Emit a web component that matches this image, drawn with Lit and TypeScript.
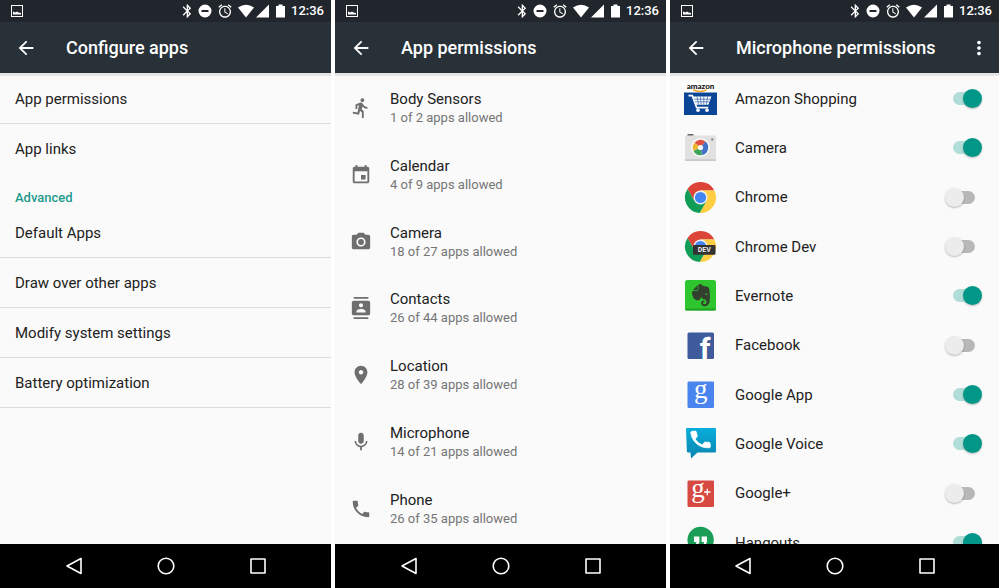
import { LitElement, html, svg, css, type TemplateResult, type SVGTemplateResult } from "lit";
import { customElement, property } from "lit/decorators.js";

const glyphs = {
  back: "M20 11H7.83l5.59-5.59L12 4l-8 8 8 8 1.41-1.41L7.83 13H20v-2z",
  more: "M12 8c1.1 0 2-.9 2-2s-.9-2-2-2-2 .9-2 2 .9 2 2 2zm0 2c-1.1 0-2 .9-2 2s.9 2 2 2 2-.9 2-2-.9-2-2-2zm0 6c-1.1 0-2 .9-2 2s.9 2 2 2 2-.9 2-2-.9-2-2-2z",
  run: "M13.49 5.48c1.1 0 2-.9 2-2s-.9-2-2-2-2 .9-2 2 .9 2 2 2zm-3.6 13.9l1-4.4 2.1 2v6h2v-7.5l-2.1-2 .6-3c1.3 1.5 3.3 2.5 5.5 2.5v-2c-1.9 0-3.5-1-4.3-2.4l-1-1.6c-.4-.6-1-1-1.7-1-.3 0-.5.1-.8.1l-5.2 2.2v4.7h2v-3.4l1.8-.7-1.6 8.1-4.9-1-.4 2 7 1.4z",
  event: "M17 12h-5v5h5v-5zM16 1v2H8V1H6v2H5c-1.11 0-1.99.9-1.99 2L3 19c0 1.1.89 2 2 2h14c1.1 0 2-.9 2-2V5c0-1.1-.9-2-2-2h-1V1h-2zm3 18H5V8h14v11z",
  camera: "M12 8.8a3.2 3.2 0 1 0 0 6.4 3.2 3.2 0 1 0 0-6.4zM9 2L7.17 4H4c-1.1 0-2 .9-2 2v12c0 1.1.9 2 2 2h16c1.1 0 2-.9 2-2V6c0-1.1-.9-2-2-2h-3.17L15 2H9zm3 15c-2.76 0-5-2.24-5-5s2.24-5 5-5 5 2.24 5 5-2.24 5-5 5z",
  contacts: "M20 0H4v2h16V0zM4 24h16v-2H4v2zM20 4H4c-1.1 0-2 .9-2 2v12c0 1.1.9 2 2 2h16c1.1 0 2-.9 2-2V6c0-1.1-.9-2-2-2zm-8 2.75c1.24 0 2.25 1.01 2.25 2.25s-1.01 2.25-2.25 2.25S9.75 10.24 9.75 9 10.76 6.75 12 6.75zM17 17H7v-1.5c0-1.67 3.33-2.5 5-2.5s5 .83 5 2.5V17z",
  place: "M12 2C8.13 2 5 5.13 5 9c0 5.25 7 13 7 13s7-7.75 7-13c0-3.87-3.13-7-7-7zm0 9.5c-1.38 0-2.5-1.12-2.5-2.5s1.12-2.5 2.5-2.5 2.5 1.12 2.5 2.5-1.12 2.5-2.5 2.5z",
  mic: "M12 14c1.66 0 2.99-1.34 2.99-3L15 5c0-1.66-1.34-3-3-3S9 3.34 9 5v6c0 1.66 1.34 3 3 3zm5.3-3c0 3-2.54 5.1-5.3 5.1S6.7 14 6.7 11H5c0 3.41 2.72 6.23 6 6.72V21h2v-3.28c3.28-.48 6-3.3 6-6.72h-1.7z",
  call: "M6.62 10.79c1.44 2.83 3.76 5.14 6.59 6.59l2.2-2.2c.27-.27.67-.36 1.02-.24 1.12.37 2.33.57 3.57.57.55 0 1 .45 1 1V20c0 .55-.45 1-1 1-9.39 0-17-7.61-17-17 0-.55.45-1 1-1h3.5c.55 0 1 .45 1 1 0 1.25.2 2.45.57 3.57.11.35.03.74-.25 1.02l-2.2 2.2z",
};

const glyph = (d: string) =>
  html`<svg class="glyph" viewBox="0 0 24 24" aria-hidden="true"><path d=${d} /></svg>`;

const chromeWheel = svg`
  <path fill="#db4437" d="M-12.98-8.48A15.5 15.5 0 0 1 13.83-7L0-7 0 0-6.06 3.5z" />
  <path fill="#ffcd40" d="M13.83-7A15.5 15.5 0 0 1-.85 15.48L6.06 3.5 0 0V-7z" />
  <path fill="#0f9d58" d="M-.85 15.48A15.5 15.5 0 0 1-12.98-8.48L-6.06 3.5 0 0 6.06 3.5z" />
  <circle r="7" fill="#f1f1f1" />
  <circle r="5.6" fill="#4285f4" />`;

const appIcons: Record<string, SVGTemplateResult> = {
  amazon: svg`
    <rect width="33" height="13" fill="#fff" />
    <text class="amazon" x="16.5" y="6.5" text-anchor="middle">amazon</text>
    <path d="M9 7.8q7 3 13.5 0" fill="none" stroke="#f7a11a" stroke-width="1.3" />
    <rect y="10.5" width="33" height="22.5" fill="#0b4596" />
    <path d="M4.5 13.7h3.8l4.4 12h11.6" fill="none" stroke="#fff" stroke-width="1.7" />
    <path d="M9 14.6h18.4l-3 8.2H12z" fill="#fff" />
    <path d="M9.8 17.2h16.6M10.8 19.8h14.6M13 14.6l1.6 8M16.4 14.6l.8 8M19.8 14.6v8M23.6 14.6l-1.2 8" stroke="#0b4596" stroke-width=".6" />
    <circle cx="14" cy="28.2" r="1.8" fill="#fff" />
    <circle cx="23" cy="28.2" r="1.8" fill="#fff" />`,
  camera: svg`
    <rect x="3.5" y="3" width="6" height="2" rx=".6" fill="#666" />
    <rect x="1" y="4.5" width="31" height="25" rx="1.2" fill="#e1e1e1" />
    <rect x="1" y="28.5" width="31" height="1.2" rx=".5" fill="#bdbdbd" />
    <circle cx="28.3" cy="8.5" r="1.2" fill="#8d8d8d" />
    <circle cx="16.5" cy="16.5" r="9.5" fill="#f7f7f7" />
    <g transform="translate(16.5 16.5)">
      <path fill="#e2513f" d="M0 0-6-4.8A7.7 7.7 0 0 1 5-5.9z" />
      <path fill="#4472c8" d="M0 0 5-5.9A7.7 7.7 0 0 1 1.5 7.5z" />
      <path fill="#3fa45b" d="M0 0 1.5 7.5A7.7 7.7 0 0 1-7 3.2z" />
      <path fill="#f0b62f" d="M0 0-7 3.2A7.7 7.7 0 0 1-6-4.8z" />
      <circle r="2.6" fill="#fff" />
    </g>`,
  chrome: svg`<g transform="translate(16.5 16.5)">${chromeWheel}</g>`,
  chromeDev: svg`
    <g transform="translate(16.5 16.5)">${chromeWheel}</g>
    <rect x="9" y="15" width="22.5" height="9.8" rx="1" fill="#333" />
    <text class="dev" x="20.3" y="22.3" text-anchor="middle">DEV</text>`,
  evernote: svg`
    <rect x="1" y="1" width="31" height="30.5" rx="2.5" fill="#2fc52f" />
    <rect x="1" y="29.5" width="31" height="2" rx="1" fill="#22a326" />
    <path transform="translate(6.4 5.2) scale(.88 .92)" fill="#33402f" d="M8.222 5.393c0 .239-.02.637-.256.895-.257.24-.652.259-.888.259H4.552c-.73 0-1.165 0-1.46.04-.159.02-.356.1-.455.14-.04.019-.04 0-.02-.02L8.38.796c.02-.02.04-.02.02.02-.04.099-.118.298-.138.457-.04.298-.04.736-.04 1.472v2.647zm5.348 17.869c-.67-.438-1.026-1.015-1.164-1.373a2.924 2.924 0 01-.217-1.095 3.007 3.007 0 013-3.004c.493 0 .888.398.888.895a.88.88 0 01-.454.776c-.099.06-.237.1-.336.12-.098.02-.473.06-.65.218-.198.16-.356.418-.356.697 0 .298.118.577.316.776.355.358.829.557 1.342.557a2.436 2.436 0 002.427-2.447c0-1.214-.809-2.29-1.875-2.766-.158-.08-.414-.14-.651-.2a8.04 8.04 0 00-.592-.1c-.829-.1-2.901-.755-3.04-2.605 0 0-.611 2.785-1.835 3.54-.118.06-.276.12-.454.16-.177.04-.374.06-.434.06-1.993.12-4.105-.517-5.565-2.03 0 0-.987-.815-1.5-3.103-.118-.558-.355-1.553-.493-2.488-.06-.338-.08-.597-.099-.836 0-.975.592-1.631 1.342-1.73h4.026c.69 0 1.086-.18 1.342-.42.336-.317.415-.775.415-1.312V1.354C9.05.617 9.703 0 10.669 0h.474c.197 0 .434.02.651.04.158.02.296.06.533.12 1.204.298 1.46 1.532 1.46 1.532s2.27.398 3.415.597c1.085.199 3.77.378 4.282 3.104 1.204 6.487.474 12.775.415 12.775-.849 6.129-5.901 5.83-5.901 5.83a4.1 4.1 0 01-2.428-.736zm4.54-13.034c-.652-.06-1.204.2-1.402.697-.04.1-.079.219-.059.278.02.06.06.08.099.1.237.12.631.179 1.204.239.572.06.967.1 1.223.06.04 0 .08-.02.119-.08.04-.06.02-.18.02-.277-.06-.537-.553-.936-1.204-1.017z" />`,
  facebook: svg`
    <rect x="3.5" y="3.5" width="26.5" height="26.5" rx="1.5" fill="#3f5b9b" />
    <text class="fb" x="21" y="30" text-anchor="middle">f</text>`,
  google: svg`
    <rect x="3.5" y="3.5" width="26.5" height="26.5" rx="1.2" fill="#4a84ee" />
    <text class="serif-g" x="16.8" y="19.5" text-anchor="middle">g</text>`,
  voice: svg`
    <defs><linearGradient id="voice" x1="0" y1="0" x2="0" y2="1">
      <stop offset="0" stop-color="#08aedb" /><stop offset="1" stop-color="#0b83b0" />
    </linearGradient></defs>
    <path fill="url(#voice)" d="M3 1h28q1 0 1 1v22.5q0 1-1 1H13.5L7 31.5l-.5-6H4q-1 0-1.1-1L2 2q0-1 1-1z" />
    <path fill="#fff" stroke="#fff" stroke-width=".8" transform="translate(4.6 .6) rotate(-6 12 12)" d=${glyphs.call} />`,
  plus: svg`
    <rect x="3.5" y="3.5" width="26.5" height="26.5" rx="1.2" fill="#d64a41" />
    <text class="serif-g" x="14" y="19.5" text-anchor="middle">g</text>
    <path d="M20 15h6.5M23.25 11.75v6.5" stroke="#fff" stroke-width="1.3" />`,
  hangouts: svg`
    <path fill="#1a9e57" d="M16.5.7a13.3 13.3 0 0 1 13.3 13.3c0 8-7 15-12.8 18v-4.7a13.3 13.3 0 1 1-.5-26.6z" />
    <path fill="#fff" d="M10 10.5h5.400v5.500l-2 4h-2.100l1.300-4H10zM17.600 10.500H23v5.500l-2 4h-2.100l1.300-4h-2.600z" />`,
};

const sheet = css`
  * { box-sizing: border-box; }
  h2, ul { margin: 0; padding: 0; }
  ul { list-style: none; }
  a { color: inherit; text-decoration: none; }
  button { border: 0; padding: 0; background: none; color: inherit; font: inherit; }
  svg { display: block; flex: none; }
  .glyph { width: 22px; height: 22px; fill: currentColor; }
`;

/** One phone screen: status bar, app bar, slotted content and navigation bar. */
@customElement("phone-screen")
export class PhoneScreen extends LitElement {
  @property() heading = "";
  @property({ type: Boolean }) menu = false;

  static styles = [sheet, css`
    :host { display: flex; flex-direction: column; min-width: 0; min-height: 0; background: #fafafa; }
    .status { display: flex; align-items: center; gap: 6px; flex: none; height: 22px; padding: 0 7px 0 11px; background: #20262b; color: #fff; }
    .status svg { fill: currentColor; }
    .note { margin-right: auto; }
    .indicators { display: flex; gap: 6px; }
    .network { display: flex; gap: 2px; }
    .clock { font-size: 13px; line-height: 22px; font-weight: 500; }
    .bar { display: flex; align-items: center; flex: none; height: 51px; padding: 0 9px 0 15px; background: #283138; color: #fff; }
    .title { flex: 1; margin-left: 29px; font-size: 18px; line-height: 24px; font-weight: 500; white-space: nowrap; }
    .content { flex: 1; min-height: 0; overflow: hidden; padding-top: 1px; box-shadow: inset 0 3px 0 #e4e4e4; }
    .nav { display: flex; justify-content: center; flex: none; height: 44px; background: #000; color: #fff; }
    .key { display: flex; align-items: center; justify-content: center; width: 92px; }
    .key svg { fill: none; stroke: currentColor; stroke-width: 1.6; stroke-linejoin: round; }
  `];

  render() {
    return html`
      <div class="status">
        <svg class="note" width="12" height="12" viewBox="0 0 12 12" aria-hidden="true"><path fill-rule="evenodd" d="M0 0h12v12H0zM1 1v10h10V1zM2 9.5V6.5L4.5 7.5 6 6.5 7.5 7.5 10 8v1.5z" /></svg>
        <div class="indicators">
          <svg width="10" height="14" viewBox="4.5 1.5 14 21" aria-label="Bluetooth"><path d="M17.71 7.71L12 2h-1v7.59L6.41 5 5 6.41 10.59 12 5 17.59 6.41 19 11 14.41V22h1l5.71-5.71-4.3-4.29 4.3-4.29zM13 5.83l1.88 1.88L13 9.59V5.83zm1.88 10.46L13 18.17v-3.76l1.88 1.88z" /></svg>
          <svg width="14" height="14" viewBox="0 0 14 14" aria-label="Do not disturb"><path fill-rule="evenodd" d="M7 .5a6.5 6.5 0 1 0 0 13 6.5 6.5 0 1 0 0-13zM3.500 6h7v2h-7z" /></svg>
          <svg width="14" height="14" viewBox="1.5 1.5 21 21" aria-label="Alarm"><path d="M22 5.72l-4.6-3.86-1.29 1.53 4.6 3.86L22 5.72zM7.88 3.39L6.6 1.86 2 5.71l1.29 1.53 4.59-3.85zM12.5 8H11v6l4.75 2.85.75-1.23-4-2.37V8zM12 4c-4.97 0-9 4.03-9 9s4.02 9 9 9c4.97 0 9-4.03 9-9s-4.03-9-9-9zm0 16c-3.87 0-7-3.13-7-7s3.13-7 7-7 7 3.13 7 7-3.13 7-7 7z" /></svg>
        </div>
        <div class="network">
          <svg width="16" height="14" viewBox="0 0 16 14" aria-label="Wi-Fi"><path d="M0 3.5Q8-2.2 16 3.5L8 13.5z" /></svg>
          <svg width="13" height="14" viewBox="0 0 13 14" aria-label="Signal"><path d="M13 .5v13H0z" /></svg>
        </div>
        <svg width="10" height="14" viewBox="0 0 10 14" aria-label="Battery"><path d="M1 2h2.500V.5h4V2H10v11.500H1z" /></svg>
        <span class="clock">12:36</span>
      </div>
      <header class="bar">
        <button class="action" aria-label="Navigate up">${glyph(glyphs.back)}</button>
        <h2 class="title">${this.heading}</h2>
        ${this.menu ? html`<button class="action" aria-label="More options">${glyph(glyphs.more)}</button>` : ""}
      </header>
      <main class="content"><slot></slot></main>
      <nav class="nav">
        <button class="key" aria-label="Back"><svg width="18" height="18" viewBox="0 0 18 18"><path d="M16 1.5v15L2 9z" /></svg></button>
        <button class="key" aria-label="Home"><svg width="18" height="18" viewBox="0 0 18 18"><circle cx="9" cy="9" r="7.8" /></svg></button>
        <button class="key" aria-label="Recents"><svg width="18" height="18" viewBox="0 0 18 18"><rect x="2" y="2" width="14" height="14" /></svg></button>
      </nav>`;
  }
}

interface Permission { icon: string; name: string; allowed: number; total: number; }
interface App { icon: string; name: string; on: boolean; }

const permissions: Permission[] = [
  { icon: glyphs.run, name: "Body Sensors", allowed: 1, total: 2 },
  { icon: glyphs.event, name: "Calendar", allowed: 4, total: 9 },
  { icon: glyphs.camera, name: "Camera", allowed: 18, total: 27 },
  { icon: glyphs.contacts, name: "Contacts", allowed: 26, total: 44 },
  { icon: glyphs.place, name: "Location", allowed: 28, total: 39 },
  { icon: glyphs.mic, name: "Microphone", allowed: 14, total: 21 },
  { icon: glyphs.call, name: "Phone", allowed: 26, total: 35 },
];

const apps: App[] = [
  { icon: "amazon", name: "Amazon Shopping", on: true },
  { icon: "camera", name: "Camera", on: true },
  { icon: "chrome", name: "Chrome", on: false },
  { icon: "chromeDev", name: "Chrome Dev", on: false },
  { icon: "evernote", name: "Evernote", on: true },
  { icon: "facebook", name: "Facebook", on: false },
  { icon: "google", name: "Google App", on: true },
  { icon: "voice", name: "Google Voice", on: true },
  { icon: "plus", name: "Google+", on: false },
  { icon: "hangouts", name: "Hangouts", on: true },
];

@customElement("app-root")
export class AppRoot extends LitElement {
  static styles = [sheet, css`
    :host { display: grid; grid-template: minmax(0, 1fr) / 331fr 331fr 329fr; gap: 4px; height: 100vh; background: #fff; color: #212121; font-family: Roboto, "Liberation Sans", sans-serif; font-size: 15px; line-height: 20px; }
    .setting { display: flex; align-items: center; height: 50px; padding: 0 15px; }
    .ruled { border-bottom: 1px solid #dcdcdc; }
    .section { height: 34px; padding: 14px 15px 0; color: #1d9a8a; font-size: 13px; line-height: 20px; font-weight: 500; }
    .permission { display: flex; align-items: center; gap: 18px; height: 67px; padding: 0 15px; }
    .permissions li:nth-child(4n) .permission { height: 66px; }
    .permission .glyph { color: #6e6e6e; }
    .lines { display: grid; }
    .count { color: #757575; font-size: 13px; line-height: 18px; }
    .app { display: flex; align-items: center; gap: 18px; height: 49px; padding: 0 17px 0 14px; }
    .apps li:nth-child(3n) .app { height: 50px; }
    .name { flex: 1; }
    .logo { width: 33px; height: 33px; overflow: visible; }
    .amazon { font: 900 8px Lato, sans-serif; fill: #111; }
    .dev { font: 700 7px Roboto, sans-serif; fill: #eee; }
    .fb { font: 700 30px Roboto, sans-serif; fill: #fff; }
    .serif-g { font: 27px "Liberation Serif", serif; fill: #fff; }
    .switch { appearance: none; display: grid; align-items: center; width: 37px; height: 20px; margin: 0; }
    .switch::before, .switch::after { content: ""; grid-area: 1 / 1; }
    .switch::before { justify-self: center; width: 22px; height: 13px; border-radius: 7px; background: #b8b8b8; }
    .switch::after { width: 19px; height: 19px; border-radius: 50%; background: #ececec; box-shadow: 0 1px 2px #0004; }
    .switch:checked::before { background: #b0ddd8; }
    .switch:checked::after { justify-self: end; background: #009688; }
  `];

  private setting(name: string, ruled = true): TemplateResult {
    return html`<li><a class="setting ${ruled ? "ruled" : ""}" href="#">${name}</a></li>`;
  }

  render() {
    return html`
      <phone-screen heading="Configure apps">
        <ul>
          ${this.setting("App permissions")}
          ${this.setting("App links", false)}
          <li class="section">Advanced</li>
          ${["Default Apps", "Draw over other apps", "Modify system settings", "Battery optimization"].map((n) => this.setting(n))}
        </ul>
      </phone-screen>
      <phone-screen heading="App permissions">
        <ul class="permissions">
          ${permissions.map((p) => html`
            <li><a class="permission" href="#">
              ${glyph(p.icon)}
              <span class="lines"><span>${p.name}</span><span class="count">${p.allowed} of ${p.total} apps allowed</span></span>
            </a></li>`)}
        </ul>
      </phone-screen>
      <phone-screen heading="Microphone permissions" menu>
        <ul class="apps">
          ${apps.map((a) => html`
            <li><label class="app">
              <svg class="logo" viewBox="0 0 33 33" aria-hidden="true">${appIcons[a.icon]}</svg>
              <span class="name">${a.name}</span>
              <input class="switch" type="checkbox" role="switch" .checked=${a.on} />
            </label></li>`)}
        </ul>
      </phone-screen>`;
  }
}
